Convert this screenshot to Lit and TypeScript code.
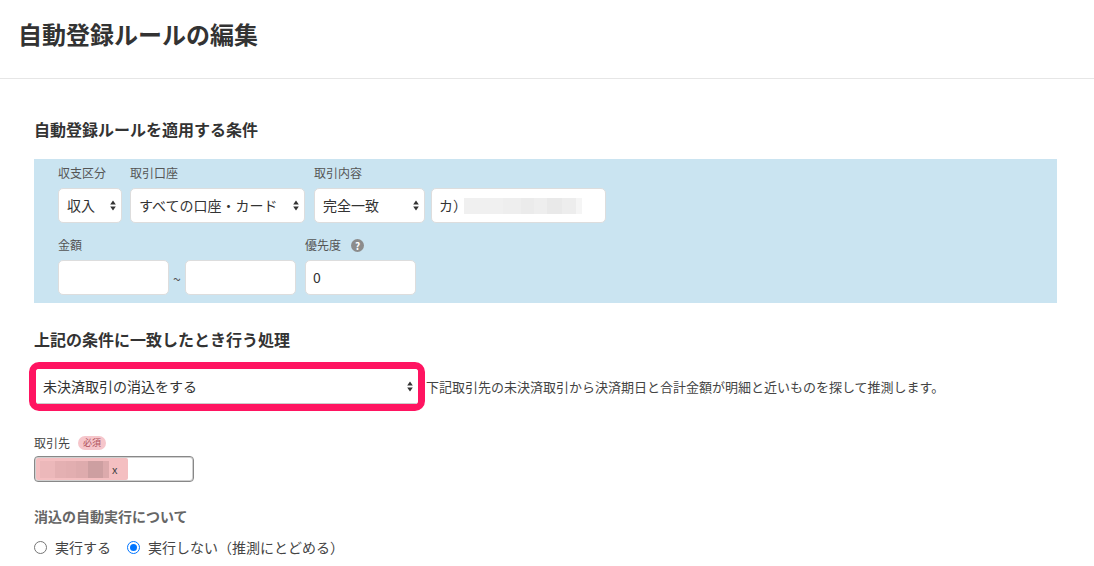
import { LitElement, html, css } from "lit";
import { customElement } from "lit/decorators.js";

const arrows = html`<svg class="arrows" width="6" height="11" viewBox="0 0 6 11"><path d="M3 0.5 L5.8 4.4 H0.2 Z M0.2 6.6 H5.8 L3 10.5 Z" fill="#333"/></svg>`;

@customElement("app-root")
export class AppRoot extends LitElement {
  static styles = css`
    :host {
      display: block;
      width: 1094px;
      height: 566px;
      overflow: hidden;
      background: #fff;
      color: #333;
      font-family: "Noto Sans CJK JP", "Noto Sans", sans-serif;
      font-size: 14px;
    }
    * { box-sizing: border-box; }
    .header {
      height: 79px;
      border-bottom: 1px solid #e6e6e6;
      padding: 17px 18px 0;
    }
    h1 {
      margin: 0;
      font-size: 24px;
      line-height: 34px;
      font-weight: 700;
      color: #333;
    }
    .main { padding: 39px 37px 0 34px; }
    h2 {
      margin: 0;
      font-size: 16px;
      line-height: 22px;
      font-weight: 700;
      color: #333;
    }
    .panel {
      margin-top: 19px;
      height: 144px;
      background: #cae4f1;
      padding: 6px 0 0 24px;
      display: flex;
      flex-direction: column;
      gap: 14px;
    }
    .row { display: flex; align-items: flex-start; }
    .field { display: flex; flex-direction: column; }
    .label {
      font-size: 12px;
      line-height: 16px;
      height: 23px;
      color: #555;
      display: flex;
      align-items: flex-start;
      gap: 10px;
    }
    .controls { display: flex; align-items: center; }
    .control {
      height: 35px;
      background: #fff;
      border: 1px solid #ddd;
      border-radius: 5px;
      display: flex;
      align-items: center;
      justify-content: space-between;
      font-size: 14px;
      color: #333;
      white-space: nowrap;
    }
    .sel { padding: 0 5px 2px 8px; }
    .arrows { margin-top: 2px; }
    .w64 { width: 64px; }
    .w175 { width: 175px; }
    .w111 { width: 111px; }
    .text { padding: 0 7px 1px; justify-content: flex-start; }
    .wide { width: 175px; margin-left: 6px; }
    .blur {
      width: 118px;
      height: 16px;
      margin-left: -3px;
      margin-top: 1px;
      background: linear-gradient(90deg,
        #f0f0f0 0 33%, #eeeeee 33% 48%, #ebebeb 48% 59%, #eeeeee 59% 70%,
        #e9e9e9 70% 83%, #ededed 83% 95%, #f5f5f5 95% 100%);
    }
    .tilde {
      width: 16px;
      text-align: center;
      font-size: 14px;
      line-height: 16px;
      color: #555;
      padding-top: 2px;
    }
    .gap8 { margin-left: 8px; }
    .gap9 { margin-left: 9px; }
    .help {
      width: 13px;
      height: 13px;
      border-radius: 50%;
      background: #8c8c8c;
      color: #fff;
      font-size: 10px;
      font-weight: 700;
      line-height: 13px;
      text-align: center;
      margin-top: 2px;
    }
    .proc { margin-top: 25px; }
    .action {
      margin-top: 12px;
      margin-left: -5px;
      display: flex;
      align-items: center;
    }
    .highlight {
      width: 396px;
      height: 49px;
      border: 7px solid #ff1461;
      border-radius: 10px;
      background: #fff;
    }
    .bigsel {
      height: 100%;
      padding: 0 5px 0 7px;
      border: none;
      border-bottom: 1px solid #ccc;
      border-radius: 3px;
    }
    .bigsel .arrows { margin-top: 0; }
    .hint {
      margin-left: 1px;
      font-size: 13px;
      line-height: 18px;
      color: #444;
      white-space: nowrap;
    }
    .partner { margin-top: 24px; }
    .plabel {
      display: flex;
      align-items: center;
      gap: 8px;
      font-size: 12px;
      line-height: 16px;
      height: 16px;
      color: #444;
    }
    .badge {
      width: 28px;
      height: 14px;
      border-radius: 7px;
      background: #f6c6cb;
      color: #b0525c;
      font-size: 9px;
      line-height: 14px;
      text-align: center;
    }
    .tokenbox {
      margin-top: 5px;
      width: 160px;
      height: 26px;
      border: 1px solid #888;
      border-radius: 4px;
      box-shadow: inset 0 0 0 1px #d0d0d0;
      padding: 1px;
      display: flex;
    }
    .token {
      width: 92px;
      background: #f4bfc1;
      border-radius: 2px;
      display: flex;
      align-items: center;
      padding-left: 4px;
      gap: 3px;
      font-size: 11px;
      color: #444;
    }
    .tblur {
      width: 69px;
      height: 17px;
      background: linear-gradient(90deg,
        #ecb8ba 0 22%, #e4b0b2 22% 38%, #e2aeb0 38% 52%, #deabad 52% 70%,
        #cd9fa1 70% 92%, #dcaaac 92% 100%);
    }
    .auto {
      margin-top: 24px;
      font-size: 14px;
      line-height: 20px;
      font-weight: 700;
      color: #666;
    }
    .radios {
      margin-top: 11px;
      display: flex;
      align-items: center;
      font-size: 14px;
      line-height: 20px;
      color: #444;
    }
    .radio { display: flex; align-items: center; gap: 8px; margin-right: 16px; }
    .dot {
      width: 13px;
      height: 13px;
      border-radius: 50%;
      border: 1px solid #767676;
      background: #fff;
    }
    .dot.on {
      border: 1.5px solid #0075ff;
      padding: 2px;
      background: #0075ff content-box;
    }
  `;

  render() {
    return html`
      <div class="header"><h1>自動登録ルールの編集</h1></div>
      <div class="main">
        <h2>自動登録ルールを適用する条件</h2>
        <div class="panel">
          <div class="row">
            <div class="field">
              <div class="label">収支区分</div>
              <div class="control sel w64">収入${arrows}</div>
            </div>
            <div class="field gap8">
              <div class="label">取引口座</div>
              <div class="control sel w175">すべての口座・カード${arrows}</div>
            </div>
            <div class="field gap9">
              <div class="label">取引内容</div>
              <div class="controls">
                <div class="control sel w111">完全一致${arrows}</div>
                <div class="control text wide">カ）<span class="blur"></span></div>
              </div>
            </div>
          </div>
          <div class="row">
            <div class="field">
              <div class="label">金額</div>
              <div class="controls">
                <div class="control w111"></div>
                <div class="tilde">~</div>
                <div class="control w111"></div>
              </div>
            </div>
            <div class="field gap9">
              <div class="label">優先度 <span class="help">?</span></div>
              <div class="control text w111">0</div>
            </div>
          </div>
        </div>
        <h2 class="proc">上記の条件に一致したとき行う処理</h2>
        <div class="action">
          <div class="highlight">
            <div class="control sel bigsel">未決済取引の消込をする${arrows}</div>
          </div>
          <div class="hint">下記取引先の未決済取引から決済期日と合計金額が明細と近いものを探して推測します。</div>
        </div>
        <div class="partner">
          <div class="plabel">取引先 <span class="badge">必須</span></div>
          <div class="tokenbox">
            <div class="token"><span class="tblur"></span>x</div>
          </div>
        </div>
        <div class="auto">消込の自動実行について</div>
        <div class="radios">
          <div class="radio"><span class="dot"></span>実行する</div>
          <div class="radio"><span class="dot on"></span>実行しない（推測にとどめる）</div>
        </div>
      </div>
    `;
  }
}
